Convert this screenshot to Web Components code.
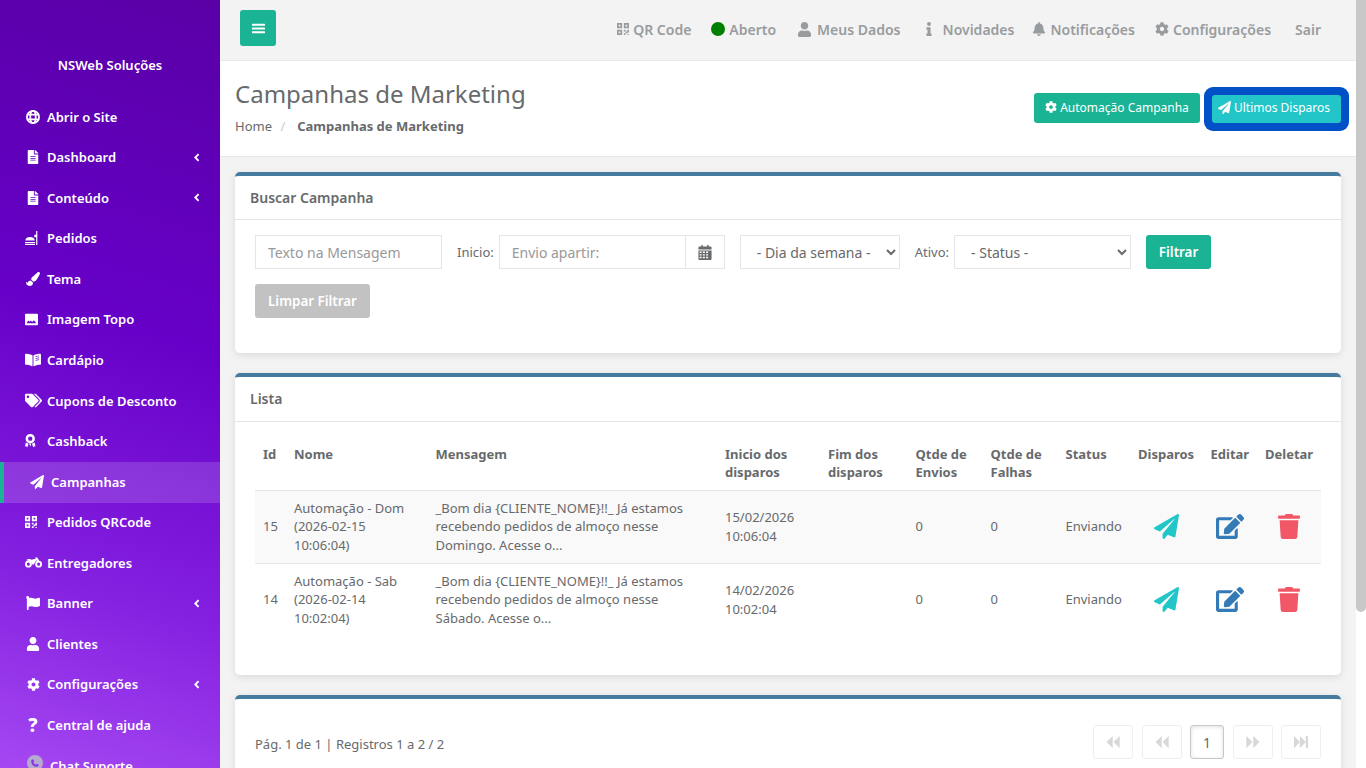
<!DOCTYPE html>
<html lang="pt-BR">
<head>
<meta charset="utf-8">
<title>Campanhas de Marketing</title>
<style>
html, body { margin: 0; height: 768px; overflow: hidden; background: #f3f3f4; }
body { font-family: "Noto Sans", "Open Sans", sans-serif; font-size: 13px; color: #676a6c; }
</style>
</head>
<body>
<ns-app></ns-app>

<script>
const ICONS = {
  plane: ['0 0 512 512', '<path d="M476 3.2L12.5 270.6c-18.1 10.4-15.8 35.6 2.2 43.2L121 358.4l287.3-253.2c5.5-4.9 13.3 2.6 8.6 8.3L176 407v80.5c0 23.6 28.5 32.9 42.5 15.8L282 426l124.6 52.2c14.2 6 30.4-2.9 33-18.2l72-432C515 7.8 493.3-6.8 476 3.2z"/>'],
  trash: ['0 0 448 512', '<path d="M432 32H312l-9.4-18.7A24 24 0 0 0 281.1 0H166.8a23.72 23.72 0 0 0-21.4 13.3L136 32H16A16 16 0 0 0 0 48v32a16 16 0 0 0 16 16h416a16 16 0 0 0 16-16V48a16 16 0 0 0-16-16zM53.2 467a48 48 0 0 0 47.9 45h245.8a48 48 0 0 0 47.9-45L416 128H32z"/>'],
  edit: ['0 0 576 512', '<path d="M402.6 83.2l90.2 90.2c3.8 3.8 3.8 10 0 13.8L274.4 405.6l-92.8 10.3c-12.4 1.4-22.9-9.1-21.5-21.5l10.3-92.8L388.8 83.2c3.8-3.8 10-3.8 13.8 0zm162-22.9l-48.8-48.8c-15.2-15.2-39.9-15.2-55.2 0l-35.4 35.4c-3.8 3.8-3.8 10 0 13.8l90.2 90.2c3.8 3.8 10 3.8 13.8 0l35.4-35.4c15.2-15.3 15.2-40 0-55.2zM384 346.2V448H64V128h229.8c3.2 0 6.2-1.3 8.5-3.5l40-40c7.6-7.6 2.2-20.5-8.5-20.5H48C21.5 64 0 85.5 0 112v352c0 26.5 21.5 48 48 48h352c26.5 0 48-21.5 48-48V306.2c0-10.7-12.9-16-20.5-8.5l-40 40c-2.2 2.3-3.5 5.3-3.5 8.5z"/>'],
  cog: ['0 0 512 512', '<path d="M487.4 315.7l-42.6-24.6c4.3-23.2 4.3-47 0-70.2l42.6-24.6c4.9-2.8 7.1-8.6 5.5-14-11.1-35.6-30-67.8-54.7-94.6-3.8-4.1-10-5.1-14.8-2.3L380.8 110c-17.9-15.4-38.5-27.3-60.8-35.1V25.8c0-5.6-3.9-10.5-9.4-11.7-36.7-8.2-74.3-7.8-109.2 0-5.5 1.2-9.4 6.1-9.4 11.7V75c-22.2 7.9-42.8 19.8-60.8 35.1L88.7 85.5c-4.9-2.8-11-1.9-14.8 2.3-24.7 26.7-43.6 58.9-54.7 94.6-1.7 5.4.6 11.2 5.5 14L67.3 221c-4.3 23.2-4.3 47 0 70.2l-42.6 24.6c-4.9 2.8-7.1 8.6-5.5 14 11.1 35.6 30 67.8 54.7 94.6 3.8 4.1 10 5.1 14.8 2.3l42.6-24.6c17.9 15.4 38.5 27.3 60.8 35.1v49.2c0 5.6 3.9 10.5 9.4 11.7 36.7 8.2 74.3 7.8 109.2 0 5.5-1.2 9.4-6.1 9.4-11.7v-49.2c22.2-7.9 42.8-19.8 60.8-35.1l42.6 24.6c4.9 2.8 11 1.9 14.8-2.3 24.7-26.7 43.6-58.9 54.7-94.6 1.5-5.5-.7-11.3-5.6-14.1zM256 336c-44.1 0-80-35.9-80-80s35.9-80 80-80 80 35.9 80 80-35.9 80-80 80z"/>'],
  user: ['0 0 448 512', '<path d="M224 256c70.7 0 128-57.3 128-128S294.7 0 224 0 96 57.3 96 128s57.3 128 128 128zm89.6 32h-16.7c-22.2 10.2-46.9 16-72.9 16s-50.6-5.8-72.9-16h-16.7C60.2 288 0 348.2 0 422.4V464c0 26.5 21.5 48 48 48h352c26.5 0 48-21.5 48-48v-41.6c0-74.2-60.2-134.4-134.4-134.4z"/>'],
  bell: ['0 0 448 512', '<path d="M224 512c35.32 0 63.97-28.65 63.97-64H160.03c0 35.35 28.65 64 63.97 64zm215.39-149.71c-19.32-20.76-55.47-51.99-55.47-154.29 0-77.7-54.48-139.9-127.94-155.16V32c0-17.67-14.32-32-31.98-32s-31.98 14.33-31.98 32v20.84C118.56 68.1 64.08 130.3 64.08 208c0 102.3-36.15 133.53-55.47 154.29-6 6.45-8.66 14.16-8.61 21.71.11 16.4 12.98 32 32.1 32h383.8c19.12 0 32-15.6 32.1-32 .05-7.55-2.61-15.27-8.61-21.71z"/>'],
  info: ['0 0 192 512', '<path d="M20 424h20V280H20c-11 0-20-9-20-20v-48c0-11 9-20 20-20h112c11 0 20 9 20 20v212h20c11 0 20 9 20 20v48c0 11-9 20-20 20H20c-11 0-20-9-20-20v-48c0-11 9-20 20-20zM96 0a72 72 0 1 1 0 144A72 72 0 0 1 96 0z"/>'],
  bars: ['0 0 448 448', '<path d="M20 60h408a20 20 0 0 1 20 20v32a20 20 0 0 1-20 20H20a20 20 0 0 1-20-20V80a20 20 0 0 1 20-20zm0 128h408a20 20 0 0 1 20 20v32a20 20 0 0 1-20 20H20a20 20 0 0 1-20-20v-32a20 20 0 0 1 20-20zm0 128h408a20 20 0 0 1 20 20v32a20 20 0 0 1-20 20H20a20 20 0 0 1-20-20v-32a20 20 0 0 1 20-20z"/>'],
  chevron: ['0 0 320 512', '<path d="M250 60L60 256l190 196" fill="none" stroke="currentColor" stroke-width="110"/>'],
  file: ['0 0 384 512', '<path d="M224 136V0H24C10.7 0 0 10.7 0 24v464c0 13.3 10.7 24 24 24h336c13.3 0 24-10.7 24-24V160H248c-13.2 0-24-10.8-24-24zm64 236c0 6.6-5.4 12-12 12H108c-6.6 0-12-5.4-12-12v-8c0-6.6 5.4-12 12-12h168c6.6 0 12 5.4 12 12zm0-64c0 6.6-5.4 12-12 12H108c-6.6 0-12-5.4-12-12v-8c0-6.6 5.4-12 12-12h168c6.6 0 12 5.4 12 12zm0-72v8c0 6.6-5.4 12-12 12H108c-6.6 0-12-5.4-12-12v-8c0-6.6 5.4-12 12-12h168c6.6 0 12 5.4 12 12zm96-114.100v6.100H256V0h6.100c6.400 0 12.500 2.500 17 7l97.900 98c4.500 4.500 7 10.600 7 16.900z"/>'],
  globe: ['0 0 512 512', '<g fill="none" stroke="currentColor" stroke-width="66"><circle cx="256" cy="256" r="222"/><ellipse cx="256" cy="256" rx="100" ry="222"/><path d="M30 170h452M30 342h452"/></g>'],
  food: ['0 0 512 512', '<path d="M0 400h370v40H0zm0 62h370v26a24 24 0 0 1-24 24H24a24 24 0 0 1-24-24zM10 350c10-90 80-130 175-130s165 40 175 130z"/><path d="M408 0h44v512h-44zm-70 150c30-6 50-14 70-34v110h-70z"/>'],
  brush: ['0 0 512 512', '<path d="M167.020 309.340c-40.120 2.580-76.530 17.860-97.190 72.300-2.350 6.210-8 9.980-14.590 9.980-11.110 0-45.460-27.670-55.250-34.350C0 439.620 37.930 512 128 512c75.860 0 128-43.770 128-120.190 0-3.110-.65-6.080-.97-9.130l-88.010-73.340zM457.890 0c-15.160 0-29.370 6.710-40.210 16.450C213.270 199.050 192 203.340 192 257.090c0 13.700 3.250 26.760 8.730 38.700l63.820 53.180c7.210 1.800 14.640 3.030 22.390 3.030 62.110 0 98.110-45.470 211.160-256.460 7.380-14.350 13.900-29.850 13.900-45.990C512 20.640 486 0 457.890 0z"/>'],
  image: ['0 0 512 512', '<path fill-rule="evenodd" d="M40 32h432a40 40 0 0 1 40 40v368a40 40 0 0 1-40 40H40a40 40 0 0 1-40-40V72a40 40 0 0 1 40-40zM70 400h372l-90-110-70 60-50-50-50 40-60-40z"/>'],
  book: ['0 0 576 512', '<path d="M542.220 32.050c-54.800 3.110-163.720 14.430-230.960 55.590-4.640 2.840-7.270 7.890-7.270 13.170v363.870c0 11.550 12.630 18.850 23.280 13.490 69.180-34.820 169.230-44.320 218.700-46.920 16.890-.89 30.020-14.430 30.020-30.660V62.750c.01-17.710-15.350-31.740-33.770-30.700zM380 120l130-30v26l-130 30zm0 70l130-30v26l-130 30zm0 70l130-30v26l-130 30zM264.730 87.640C197.500 46.480 88.580 35.170 33.780 32.050 15.360 31.010 0 45.040 0 62.750V400.600c0 16.240 13.130 29.780 30.020 30.660 49.490 2.600 149.590 12.110 218.770 46.950 10.620 5.350 23.210-1.940 23.210-13.460V100.630c0-5.290-2.620-10.140-7.270-12.990z" fill-rule="evenodd"/>'],
  tags: ['0 0 640 512', '<path d="M497.941 225.941L286.059 14.059A48 48 0 0 0 252.118 0H48C21.490 0 0 21.490 0 48v204.118a48 48 0 0 0 14.059 33.941l211.882 211.882c18.744 18.745 49.136 18.746 67.882 0l204.118-204.118c18.745-18.745 18.745-49.137 0-67.882zM112 160c-26.510 0-48-21.490-48-48s21.490-48 48-48 48 21.490 48 48-21.490 48-48 48zm513.941 133.823L421.823 497.941c-18.745 18.745-49.137 18.745-67.882 0l-.36-.36L527.640 323.522c16.999-16.999 26.360-39.600 26.360-63.640s-9.362-46.641-26.360-63.640L331.397 0h48.721a48 48 0 0 1 33.941 14.059l211.882 211.882c18.745 18.745 18.745 49.137 0 67.882z"/>'],
  award: ['0 0 384 512', '<path fill-rule="evenodd" d="M192 0a170 170 0 1 1 0 340A170 170 0 0 1 192 0zm0 90a80 80 0 1 0 0 160 80 80 0 0 0 0-160z"/><path d="M30 310l100 50-50 130-26-40-54 6zm324 0l-100 50 50 130 26-40 54 6z"/><path d="M150 350h84l-42 110z"/>'],
  qr: ['0 0 448 448', '<path fill-rule="evenodd" d="M0 0h192v192H0zm64 64v64h64V64zM256 0h192v192H256zm64 64v64h64V64zM0 256h192v192H0zm64 64v64h64v-64zM256 256h64v64h-64zm128 0h64v96h-64zm-64 64h64v64h-64zm-64 64h64v64h-64zm128 32h64v32h-64z"/>'],
  moto: ['0 0 640 512', '<path fill-rule="evenodd" d="M128 190a128 128 0 1 1 0 256 128 128 0 0 1 0-256zm0 70a58 58 0 1 0 0 116 58 58 0 0 0 0-116zM512 190a128 128 0 1 1 0 256 128 128 0 0 1 0-256zm0 70a58 58 0 1 0 0 116 58 58 0 0 0 0-116z"/><path d="M60 150c60-50 130-30 190 0l100-30h60l-40-50h90l80 120-70 40-40-60-100 160H250c0-90-70-150-190-150z"/><path d="M120 130h110l-30 40h-60z"/>'],
  flag: ['0 0 512 512', '<path d="M349.565 98.783C295.978 98.783 251.721 64 184.348 64c-24.955 0-47.309 4.384-68.045 12.013a55.947 55.947 0 0 0 3.586-23.562C118.117 24.015 94.806 1.206 66.338.048 34.345-1.254 8 24.296 8 56c0 19.026 9.497 35.825 24 45.945V488c0 13.255 10.745 24 24 24h16c13.255 0 24-10.745 24-24v-94.400c28.311-12.064 63.582-22.122 114.435-22.122 53.588 0 97.844 34.783 165.217 34.783 48.169 0 86.667-16.294 122.505-40.858C506.840 359.452 512 349.571 512 339.045v-243.100c0-23.393-24.269-38.870-45.485-29.016-34.338 15.948-76.454 31.854-116.950 31.854z"/>'],
  phone: ['0 0 512 512', '<path d="M150 60l70 110-50 50c20 50 70 100 122 122l50-50 110 70c-10 50-50 90-100 90C190 452 60 322 60 160c0-50 40-90 90-100z"/>'],
  calendar: ['0 0 448 512', '<path fill-rule="evenodd" d="M100 0h50v50h148V0h50v50h60a40 40 0 0 1 40 40v62H0V90a40 40 0 0 1 40-40h60zM0 184h448v288a40 40 0 0 1-40 40H40a40 40 0 0 1-40-40zm40 40v50h70v-50zm110 0v50h70v-50zm110 0v50h70v-50zm-220 88v50h70v-50zm110 0v50h70v-50zm110 0v50h70v-50zm-220 88v50h70v-50zm110 0v50h70v-50zm110 0v50h70v-50z"/>'],
  first: ['0 0 512 512', '<path d="M246 60v392L50 256zM470 60v392L274 256z"/>'],
  next: ['0 0 512 512', '<path d="M266 60v392l196-196zM42 60v392l196-196z"/>'],
  last: ['0 0 512 512', '<path d="M30 60v392l190-196zM220 60v392l190-196zM410 60h72v392h-72z"/>']
};

class NsIcon extends HTMLElement {
  connectedCallback() {
    const [vb, body] = ICONS[this.getAttribute('name')];
    const w = this.getAttribute('w') || '14';
    const h = this.getAttribute('h') || w;
    this.attachShadow({mode: 'open'}).innerHTML = `
      <style>
      :host { display: inline-flex; align-items: center; justify-content: center; color: inherit; line-height: 0; }
      svg { width: ${w}px; height: ${h}px; fill: currentColor; display: block; }
      </style>
      <svg viewBox="${vb}" aria-hidden="true">${body}</svg>`;
  }
}
customElements.define('ns-icon', NsIcon);

class NsNavItem extends HTMLElement {
  connectedCallback() {
    const icon = this.getAttribute('icon');
    const w = this.getAttribute('w') || '14';
    const h = this.getAttribute('h') || w;
    const glyph = this.getAttribute('glyph');
    let mark = `<ns-icon name="${icon}" w="${w}" h="${h}"></ns-icon>`;
    if (glyph) mark = `<span class="glyph">${glyph}</span>`;
    if (this.hasAttribute('chat')) mark = `<span class="chat"><ns-icon name="phone" w="10"></ns-icon></span>`;
    this.attachShadow({mode: 'open'}).innerHTML = `
      <style>
      :host { display: flex; align-items: center; box-sizing: border-box; height: 40.57px; padding: 0 0 2px 25px; color: #fff; font-weight: 600; font-size: 13px; }
      :host([active]) { background: rgba(255,255,255,.15); border-left: 4px solid #1ab394; }
      :host([chat]) { padding-left: 27px; }
      .ico { width: 16px; margin-right: 6px; display: flex; justify-content: center; flex: none; }
      :host([left]) .ico { justify-content: flex-start; }
      :host([chat]) .ico { margin-right: 7px; }
      .glyph { font-weight: 800; font-size: 19px; line-height: 16px; }
      .chat { flex: none; width: 16px; height: 16px; border-radius: 50%; background: #b5a9cf; display: flex; align-items: center; justify-content: center; color: #8b35e2; margin-top: -5px; }
      .chev { margin-left: auto; margin-right: 20px; }
      </style>
      <span class="ico">${mark}</span>
      <slot></slot>
      ${this.hasAttribute('sub') ? '<ns-icon class="chev" name="chevron" w="6" h="9"></ns-icon>' : ''}`;
  }
}
customElements.define('ns-nav-item', NsNavItem);

class NsSidebar extends HTMLElement {
  connectedCallback() {
    const items = [
      ['globe', 'Abrir o Site', 14], ['file', 'Dashboard', 14, 1], ['file', 'Conteúdo', 14, 1],
      ['food', 'Pedidos', 14, 0, 14, 1], ['brush', 'Tema', 14], ['image', 'Imagem Topo', 13, 0, 13, 1],
      ['book', 'Cardápio', 16], ['tags', 'Cupons de Desconto', 17], ['award', 'Cashback', 10.5, 0, 14, 1]
    ];
    const after = [
      ['qr', 'Pedidos QRCode', 12, 0, 12, 1], ['moto', 'Entregadores', 17], ['flag', 'Banner', 14, 1],
      ['user', 'Clientes', 14], ['cog', 'Configurações', 13, 1]
    ];
    const row = ([icon, label, w, sub, h, left]) =>
      `<ns-nav-item icon="${icon}" w="${w}"${h ? ` h="${h}"` : ''}${sub ? ' sub' : ''}${left ? ' left' : ''}>${label}</ns-nav-item>`;
    this.attachShadow({mode: 'open'}).innerHTML = `
      <style>
      :host { display: block; flex: none; width: 220px; height: 768px; overflow: hidden; color: #fff;
        background: linear-gradient(197deg, #5900a6 0%, #6600c8 42%, #8420e0 75%, #a548f2 100%); }
      .brand { height: 97.3px; box-sizing: border-box; padding-top: 56px; text-align: center; font-weight: 600; font-size: 13px; line-height: 18px; }
      </style>
      <div class="brand">NSWeb Soluções</div>
      ${items.map(row).join('')}
      <ns-nav-item icon="plane" w="14" active>Campanhas</ns-nav-item>
      ${after.map(row).join('')}
      <ns-nav-item glyph="?">Central de ajuda</ns-nav-item>
      <ns-nav-item chat>Chat Suporte</ns-nav-item>`;
  }
}
customElements.define('ns-sidebar', NsSidebar);

class NsTopbar extends HTMLElement {
  connectedCallback() {
    this.attachShadow({mode: 'open'}).innerHTML = `
      <style>
      :host { display: flex; align-items: center; height: 60px; padding: 0 35px 0 20px; background: #f3f3f4; border-bottom: 1px solid #e7eaec; color: #999c9e; font-weight: 600; font-size: 14px; }
      .toggle { width: 36px; height: 36px; margin-bottom: 4px; background: #1ab394; border-radius: 3px; color: #fff; display: flex; align-items: center; justify-content: center; }
      nav { margin-left: auto; margin-bottom: 2px; display: flex; align-items: center; }
      a { display: flex; align-items: center; }
      a ns-icon { margin-right: 4px; }
      .dot { width: 14px; height: 14px; border-radius: 50%; background: #008000; margin-right: 4px; }
      </style>
      <span class="toggle"><ns-icon name="bars" w="13" h="13"></ns-icon></span>
      <nav>
        <a><ns-icon name="qr" w="12"></ns-icon>QR Code</a>
        <a style="margin-left:20px"><span class="dot"></span>Aberto</a>
        <a style="margin-left:21px"><ns-icon name="user" w="15" style="margin-right:5px"></ns-icon>Meus Dados</a>
        <a style="margin-left:24px"><ns-icon name="info" w="8" h="14" style="margin-right:10px"></ns-icon>Novidades</a>
        <a style="margin-left:18px"><ns-icon name="bell" w="14"></ns-icon>Notificações</a>
        <a style="margin-left:20px"><ns-icon name="cog" w="14"></ns-icon>Configurações</a>
        <a style="margin-left:24px">Sair</a>
      </nav>`;
  }
}
customElements.define('ns-topbar', NsTopbar);

class NsHeading extends HTMLElement {
  connectedCallback() {
    this.attachShadow({mode: 'open'}).innerHTML = `
      <style>
      :host { display: flex; justify-content: space-between; height: 96px; box-sizing: border-box; padding: 0 15px; background: #fff; border-bottom: 1px solid #e7eaec; }
      h2 { margin: 19px 0 0; font-size: 24px; font-weight: 400; line-height: 28px; color: #676a6c; }
      .crumb { margin-top: 9px; font-size: 13px; line-height: 18px; }
      .crumb i { font-style: normal; color: #ccc; padding: 0 10px 0 5px; }
      .crumb b { font-weight: 700; margin-left: 2px; }
      .actions { display: flex; align-items: flex-end; height: 62px; }
      .btn { display: inline-flex; align-items: center; justify-content: center; box-sizing: border-box; color: #fff; font-size: 12px; border-radius: 3px; padding-bottom: 2px; }
      .btn ns-icon { margin-right: 3px; }
      .auto { width: 166px; height: 30px; background: #1ab394; }
      .last { width: 129px; height: 28px; background: #23c6c8; margin-left: 12px; box-shadow: 0 0 0 8px #0050c8; padding: 0 5px 4px 0; }
      </style>
      <div>
        <h2>Campanhas de Marketing</h2>
        <div class="crumb">Home <i>/</i><b>Campanhas de Marketing</b></div>
      </div>
      <div class="actions">
        <span class="btn auto"><ns-icon name="cog" w="12"></ns-icon>Automação Campanha</span>
        <span class="btn last"><ns-icon name="plane" w="13"></ns-icon>Ultimos Disparos</span>
      </div>`;
  }
}
customElements.define('ns-heading', NsHeading);

class NsCard extends HTMLElement {
  connectedCallback() {
    const title = this.getAttribute('heading');
    const hh = this.getAttribute('hh') || '44';
    this.attachShadow({mode: 'open'}).innerHTML = `
      <style>
      :host { display: block; margin: 0 15px 20px; background: #fff; border-top: 4px solid #467a9f; border-radius: 5px; box-shadow: 0 2px 8px rgba(0,0,0,.1); }
      header { height: ${hh}px; box-sizing: border-box; border-bottom: 1px solid #e5e5e5; padding: 0 15px ${hh - 44}px; display: flex; align-items: center; font-size: 14px; font-weight: 600; color: #676a6c; }
      .body { padding: 15px 20px; }
      </style>
      ${title ? `<header>${title}</header>` : ''}
      <div class="body"><slot></slot></div>`;
  }
}
customElements.define('ns-card', NsCard);

class NsFilter extends HTMLElement {
  connectedCallback() {
    this.attachShadow({mode: 'open'}).innerHTML = `
      <style>
      :host { display: block; height: 103px; }
      * { box-sizing: border-box; }
      .row { display: flex; align-items: center; height: 34px; }
      label { font-size: 13px; margin: 0 5px 0 15px; }
      input, select { height: 34px; border: 1px solid #e5e6e7; background: #fff; color: #676a6c; font: 400 14px "Noto Sans", "Open Sans", sans-serif; padding: 0 12px; outline: 0; border-radius: 0; }
      input::placeholder { color: #999; opacity: 1; }
      input.joined { border-right: 0; }
      select { padding: 0 8px 0 12px; }
      .addon { width: 40px; height: 34px; border: 1px solid #e5e6e7; display: flex; align-items: center; justify-content: center; color: #676a6c; }
      button { height: 34px; border: 0; border-radius: 3px; color: #fff; font: 600 13.4px "Noto Sans", "Open Sans", sans-serif; padding: 0; }
      </style>
      <div class="row">
        <input style="width:187px" placeholder="Texto na Mensagem">
        <label>Inicio:</label>
        <input class="joined" style="width:186px" placeholder="Envio apartir:">
        <span class="addon"><ns-icon name="calendar" w="14" h="15"></ns-icon></span>
        <select style="width:160px;margin-left:15px"><option>- Dia da semana -</option></select>
        <label>Ativo:</label>
        <select style="width:177px"><option>- Status -</option></select>
        <button style="width:65px;margin-left:15px;background:#1ab394">Filtrar</button>
      </div>
      <button style="width:115px;margin-top:15px;background:#c2c2c2">Limpar Filtrar</button>`;
  }
}
customElements.define('ns-filter', NsFilter);

class NsTable extends HTMLElement {
  connectedCallback() {
    const rows = [
      ['15', 'Automação - Dom (2026-02-15 10:06:04)', '_Bom dia {CLIENTE_NOME}!!_ Já estamos recebendo pedidos de almoço nesse Domingo. Acesse o...', '15/02/2026 10:06:04'],
      ['14', 'Automação - Sab (2026-02-14 10:02:04)', '_Bom dia {CLIENTE_NOME}!!_ Já estamos recebendo pedidos de almoço nesse Sábado. Acesse o...', '14/02/2026 10:02:04']
    ];
    const widths = [31, 141.5, 289.5, 103, 87.5, 75, 75, 72.5, 72.5, 54.5, 64];
    const heads = ['Id', 'Nome', 'Mensagem', 'Inicio dos disparos', 'Fim dos disparos', 'Qtde de Envios', 'Qtde de Falhas', 'Status', 'Disparos', 'Editar', 'Deletar'];
    this.attachShadow({mode: 'open'}).innerHTML = `
      <style>
      :host { display: block; height: 223px; }
      table { border-collapse: collapse; table-layout: fixed; width: 1066px; font-size: 13px; line-height: 1.42857; }
      th { text-align: left; font-weight: 700; padding: 7.6px 8px 0; height: 53px; box-sizing: border-box; vertical-align: top; border-bottom: 1px solid #e7e7e7; }
      td { padding: 0 8px; vertical-align: middle; border-bottom: 1px solid #e7e7e7; }
      tbody tr { height: 73px; }
      tbody tr:nth-child(odd) { background: #f9f9f9; }
      tbody tr:last-child td { border-bottom: 0; }
      td.ic { text-align: center; padding: 0; line-height: 0; }
      .plane { color: #23c6c8; }
      .edit { color: #337ab7; }
      .trash { color: #f25767; }
      </style>
      <table>
        <colgroup>${widths.map(w => `<col style="width:${w}px">`).join('')}</colgroup>
        <thead><tr>${heads.map(h => `<th>${h}</th>`).join('')}</tr></thead>
        <tbody>${rows.map(r => `<tr>
          <td>${r[0]}</td><td>${r[1]}</td><td>${r[2]}</td><td>${r[3]}</td><td></td><td>0</td><td>0</td><td>Enviando</td>
          <td class="ic"><ns-icon class="plane" name="plane" w="25"></ns-icon></td>
          <td class="ic"><ns-icon class="edit" name="edit" w="28" h="25"></ns-icon></td>
          <td class="ic"><ns-icon class="trash" name="trash" w="22" h="25"></ns-icon></td>
        </tr>`).join('')}</tbody>
      </table>`;
  }
}
customElements.define('ns-table', NsTable);

class NsPager extends HTMLElement {
  connectedCallback() {
    this.attachShadow({mode: 'open'}).innerHTML = `
      <style>
      :host { display: flex; align-items: center; justify-content: space-between; height: 34px; margin-top: 11px; font-size: 13px; }
      .txt { padding-top: 4px; }
      .btns { display: flex; gap: 8.5px; }
      .b { box-sizing: border-box; width: 40px; height: 34px; border: 1px solid #eee; border-radius: 3px; color: #d8d8d8; display: flex; align-items: center; justify-content: center; background: #fff; }
      .cur { width: 34px; border-color: #c8c8c8; color: #676a6c; font-size: 14px; box-shadow: inset 0 1px 4px rgba(0,0,0,.12); }
      </style>
      <span class="txt">Pág. 1 de 1 | Registros 1 a 2 / 2</span>
      <div class="btns">
        <span class="b"><ns-icon name="first" w="16"></ns-icon></span>
        <span class="b"><ns-icon name="first" w="16"></ns-icon></span>
        <span class="b cur">1</span>
        <span class="b"><ns-icon name="next" w="16"></ns-icon></span>
        <span class="b"><ns-icon name="last" w="16"></ns-icon></span>
      </div>`;
  }
}
customElements.define('ns-pager', NsPager);

class NsScrollbar extends HTMLElement {
  connectedCallback() {
    this.attachShadow({mode: 'open'}).innerHTML = `
      <style>
      :host { display: block; flex: none; width: 10px; height: 768px; background: #fff; }
      div { height: 612px; background: #c8c8c8; border-radius: 0 0 5px 5px; }
      </style>
      <div></div>`;
  }
}
customElements.define('ns-scrollbar', NsScrollbar);

class NsApp extends HTMLElement {
  connectedCallback() {
    this.attachShadow({mode: 'open'}).innerHTML = `
      <style>
      :host { display: flex; height: 768px; overflow: hidden; }
      main { flex: 1; min-width: 0; height: 768px; overflow: hidden; background: #f3f3f4; }
      ns-card:first-of-type { margin-top: 15px; }
      </style>
      <ns-sidebar></ns-sidebar>
      <main>
        <ns-topbar></ns-topbar>
        <ns-heading></ns-heading>
        <ns-card heading="Buscar Campanha"><ns-filter></ns-filter></ns-card>
        <ns-card heading="Lista" hh="45"><ns-table></ns-table></ns-card>
        <ns-card><ns-pager></ns-pager></ns-card>
      </main>
      <ns-scrollbar></ns-scrollbar>`;
  }
}
customElements.define('ns-app', NsApp);
</script>
</body>
</html>
